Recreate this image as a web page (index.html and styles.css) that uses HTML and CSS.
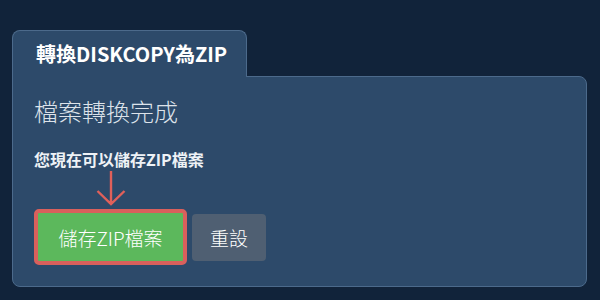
FILE: index.html
```html
<!DOCTYPE html>
<html lang="zh-Hant">
<head>
    <meta charset="UTF-8">
    <meta name="viewport" content="width=device-width, initial-scale=1.0">
    <title>轉換DISKCOPY為ZIP</title>
    <link rel="stylesheet" href="styles.css">
</head>
<body>

    <div class="card">
        <div class="tab">轉換DISKCOPY為ZIP</div>
        <div class="panel">
            <h2 class="done">檔案轉換完成</h2>
            <p class="hint">您現在可以儲存ZIP檔案</p>
            <div class="actions">
                <div class="save-wrap">
                    <svg class="arrow" width="30" height="36" viewBox="0 0 30 36">
                        <path d="M15 0 V33 M1.5 20 L15 33 L28.5 20" fill="none" stroke="#e0605a" stroke-width="2.4"/>
                    </svg>
                    <button class="btn btn-save">儲存ZIP檔案</button>
                </div>
                <button class="btn btn-reset">重設</button>
            </div>
        </div>
    </div>

</body>
</html>
```

FILE: styles.css
```css
*{
    box-sizing: border-box;
}
html,body{
    margin: 0;
    padding: 0;
    height: 100%;
}
body{
    background: #11233a;
    font-family: "Noto Sans CJK TC", "Noto Sans", sans-serif;
    color: #fff;
    padding: 30px 13px 0 12px;
}
.card{
    display: flex;
    flex-direction: column;
    align-items: flex-start;
}
.tab{
    width: 235px;
    height: 47px;
    margin-bottom: -1px;
    padding-left: 23px;
    background: #2d4a6a;
    border: 1px solid #4c6a8b;
    border-bottom: none;
    border-radius: 8px 8px 0 0;
    font-size: 20px;
    font-weight: 700;
    line-height: 46px;
    position: relative;
    z-index: 1;
}
.panel{
    align-self: stretch;
    height: 211px;
    background: #2d4a6a;
    border: 1px solid #4c6a8b;
    border-radius: 0 8px 8px 8px;
    padding: 18px 20px 0 21px;
}
.done{
    margin: 0;
    font-size: 24px;
    font-weight: 300;
    line-height: 32px;
    color: #dde3ea;
}
.hint{
    margin: 21px 0 0;
    font-size: 16px;
    font-weight: 700;
    line-height: 22px;
    color: #eef2f6;
}
.actions{
    display: flex;
    align-items: flex-end;
    gap: 5px;
    margin-top: 1px;
}
.save-wrap{
    display: flex;
    flex-direction: column;
    align-items: center;
}
.arrow{
    display: block;
    margin-bottom: 2px;
}
.btn{
    font-family: inherit;
    font-size: 19px;
    font-weight: 300;
    color: #fff;
    border: none;
    border-radius: 4px;
    padding: 0;
    cursor: pointer;
}
.btn-save{
    width: 153px;
    height: 56px;
    background: #5cb85c;
    border: 4px solid #d9605c;
    border-radius: 5px;
}
.btn-reset{
    width: 74px;
    height: 47px;
    margin-bottom: 4px;
    background: #4f5f72;
}
```
